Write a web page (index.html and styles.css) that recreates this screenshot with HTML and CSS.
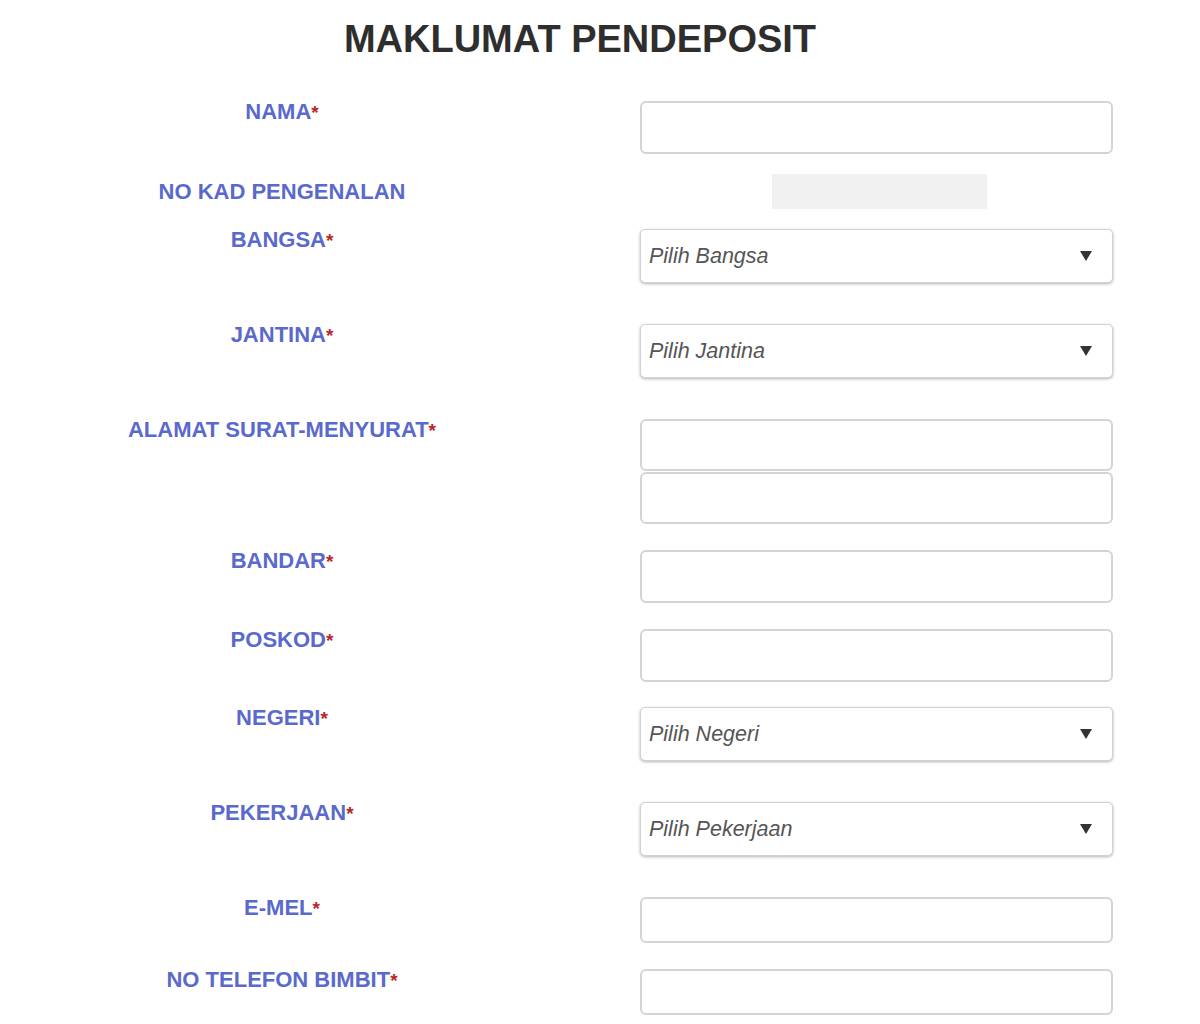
FILE: index.html
```html
<!DOCTYPE html>
<html lang="ms">
<head>
  <meta charset="UTF-8">
  <meta name="viewport" content="width=device-width, initial-scale=1.0">
  <title>Maklumat Pendeposit</title>
  <link rel="stylesheet" href="styles.css">
</head>
<body>
  <div class="page">
    <h1>MAKLUMAT PENDEPOSIT</h1>

    <form class="deposit-form">
      <div class="row">
        <label for="nama">NAMA<span class="req">*</span></label>
        <input type="text" id="nama" class="field">
      </div>

      <div class="row row-center">
        <label>NO KAD PENGENALAN</label>
        <div class="ic-box"></div>
      </div>

      <div class="row row-select">
        <label>BANGSA<span class="req">*</span></label>
        <div class="select">
          <span>Pilih Bangsa</span>
          <svg width="12" height="10" viewBox="0 0 12 10"><path d="M0 0h12L6 10z" fill="#333"/></svg>
        </div>
      </div>

      <div class="row row-select">
        <label>JANTINA<span class="req">*</span></label>
        <div class="select">
          <span>Pilih Jantina</span>
          <svg width="12" height="10" viewBox="0 0 12 10"><path d="M0 0h12L6 10z" fill="#333"/></svg>
        </div>
      </div>

      <div class="row row-wide">
        <label for="alamat1">ALAMAT SURAT-MENYURAT<span class="req">*</span></label>
        <div class="stack">
          <input type="text" id="alamat1" class="field">
          <input type="text" id="alamat2" class="field">
        </div>
      </div>

      <div class="row row-wide">
        <label for="bandar">BANDAR<span class="req">*</span></label>
        <input type="text" id="bandar" class="field">
      </div>

      <div class="row row-poskod">
        <label for="poskod">POSKOD<span class="req">*</span></label>
        <input type="text" id="poskod" class="field">
      </div>

      <div class="row row-select">
        <label>NEGERI<span class="req">*</span></label>
        <div class="select">
          <span>Pilih Negeri</span>
          <svg width="12" height="10" viewBox="0 0 12 10"><path d="M0 0h12L6 10z" fill="#333"/></svg>
        </div>
      </div>

      <div class="row row-select">
        <label>PEKERJAAN<span class="req">*</span></label>
        <div class="select">
          <span>Pilih Pekerjaan</span>
          <svg width="12" height="10" viewBox="0 0 12 10"><path d="M0 0h12L6 10z" fill="#333"/></svg>
        </div>
      </div>

      <div class="row row-wide">
        <label for="emel">E-MEL<span class="req">*</span></label>
        <input type="email" id="emel" class="field field-short">
      </div>

      <div class="row">
        <label for="telefon">NO TELEFON BIMBIT<span class="req">*</span></label>
        <input type="text" id="telefon" class="field field-short">
      </div>
    </form>
  </div>
</body>
</html>
```

FILE: styles.css
```css
body {
  margin: 0;
  background-color: #fff;
  font-family: "Liberation Sans", Arial, sans-serif;
  color: #333;
}
.page {
  width: 1160px;
}
h1 {
  margin: 16px 0 39px;
  font-size: 38px;
  line-height: 46px;
  font-weight: bold;
  text-align: center;
  color: #2e2e2e;
}
.deposit-form {
  display: flex;
  flex-direction: column;
}
.row {
  display: grid;
  grid-template-columns: 562px 473px;
  column-gap: 78px;
  align-items: start;
  margin-bottom: 20px;
}
.row-center {
  align-items: center;
}
.row-select {
  margin-bottom: 41px;
}
.row-wide {
  margin-bottom: 26px;
}
.row-poskod {
  margin-bottom: 25px;
}
.row label {
  padding-left: 2px;
  text-align: center;
  font-size: 22px;
  line-height: 22px;
  font-weight: bold;
  color: #5a69cc;
}
.req {
  font-size: 19px;
  color: #b8282b;
}
.field {
  box-sizing: border-box;
  width: 100%;
  height: 53px;
  margin: 0;
  border: 2px solid #d4d4d4;
  border-radius: 6px;
  background: #fff;
  font-size: 20px;
  font-family: inherit;
}
.field-short {
  height: 46px;
}
.stack {
  display: flex;
  flex-direction: column;
  gap: 1px;
}
.stack .field {
  height: 52px;
}
.ic-box {
  width: 215px;
  height: 35px;
  margin-left: 132px;
  background-color: #f1f1f1;
}
.select {
  box-sizing: border-box;
  height: 54px;
  display: flex;
  align-items: center;
  justify-content: space-between;
  padding: 0 20px 0 8px;
  border: 1px solid #d2d2d2;
  border-radius: 5px;
  box-shadow: 0 1px 3px rgba(0, 0, 0, 0.3);
  background: #fff;
}
.select span {
  font-size: 21.5px;
  font-style: italic;
  color: #555;
}
```
